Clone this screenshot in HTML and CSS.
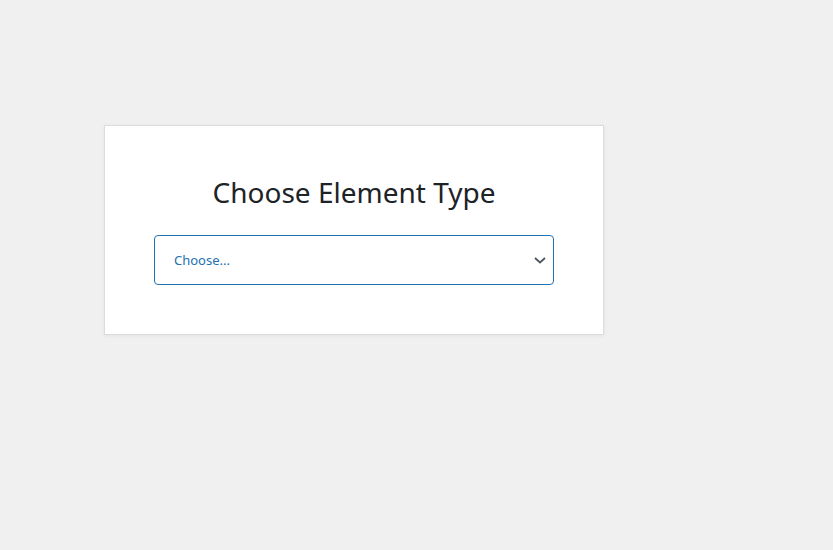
FILE: index.html
```html
<!DOCTYPE html>
<html>
<head>
<meta charset="utf-8">
<link rel="stylesheet" href="styles.css">
</head>
<body>
<div class="page">
  <div class="card">
    <h2 class="title">Choose Element Type</h2>
    <div class="select">
      <span class="select-text">Choose...</span>
      <svg class="chevron" width="14" height="10" viewBox="0 0 14 10"><path d="M2 3 L7 7.5 L12 3" fill="none" stroke="#50575e" stroke-width="1.8"/></svg>
    </div>
  </div>
</div>
</body>
</html>
```
FILE: styles.css
```css
html, body {
  margin: 0;
  padding: 0;
  background: #f0f0f1;
  font-family: "Noto Sans", "Open Sans", sans-serif;
}
.page {
  width: 833px;
  height: 550px;
  padding-top: 125px;
  padding-left: 104px;
  box-sizing: border-box;
}
.card {
  width: 500px;
  height: 210px;
  box-sizing: border-box;
  background: #fff;
  border: 1px solid #dcdcde;
  box-shadow: 0 1px 4px rgba(0,0,0,0.06);
  padding: 46px 49px 0;
}
.title {
  margin: 0 0 23px;
  font-size: 28px;
  font-weight: 400;
  line-height: 40px;
  color: #1d2327;
  text-align: center;
}
.select {
  height: 50px;
  box-sizing: border-box;
  border: 1px solid #2271b1;
  border-radius: 4px;
  display: flex;
  align-items: center;
  justify-content: space-between;
  padding: 0 6px 0 19px;
}
.select-text {
  font-size: 13px;
  color: #2271b1;
}
.chevron {
  display: block;
}
```
